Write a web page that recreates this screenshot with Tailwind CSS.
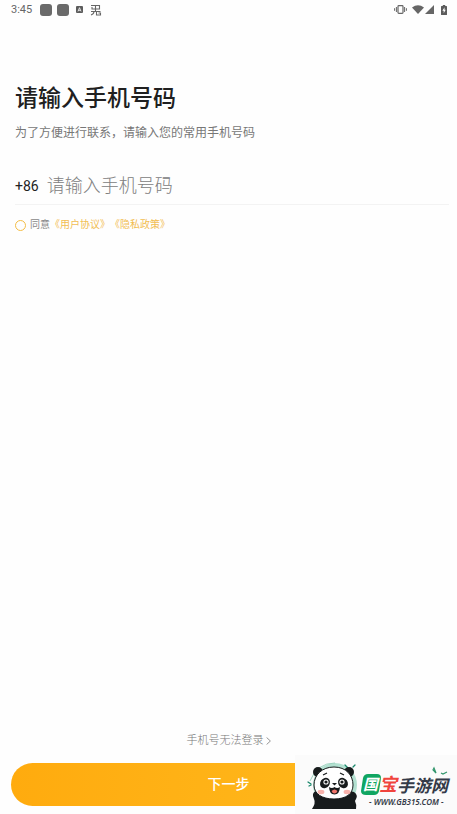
<!DOCTYPE html>
<html lang="zh-CN">
<head>
    <meta charset="UTF-8">
    <title>请输入手机号码</title>
    <meta name="viewport" content="width=device-width, initial-scale=1.0">
    <script src="https://cdn.jsdelivr.net/npm/@tailwindcss/browser@4"></script>
</head>
<body class="min-h-screen bg-[#fefefe] flex flex-col font-['Roboto','Noto_Sans_CJK_SC',sans-serif]">
    <!-- Status bar -->
    <header class="h-[19px] pl-[11px] pr-[10px] flex items-center justify-between text-[#666]">
        <div class="flex items-center">
            <span class="text-[11px] leading-4 mr-2">3:45</span>
            <span class="size-3 rounded-[3px] bg-[#6a6a6a] mr-[5px]"></span>
            <span class="size-3 rounded-[3px] bg-[#6a6a6a] mr-[7px]"></span>
            <svg class="size-[7px] mr-[7px]" viewBox="0 0 7 7"><rect width="7" height="7" rx="1" fill="#5c5c5c"/><path d="M2 5.4 3.5 1.7 5 5.4M2.5 4.3h2" fill="none" stroke="#fff" stroke-width=".8"/></svg>
            <svg class="size-3" viewBox="0 0 12 12" fill="none" stroke="#666" stroke-width="1.1"><path d="M1 1.5h8.500v3.500H2V3M5.500 1.500v6M1 7.500h9.500M4 7.500q0 2.500-3 3.500M6.500 7.500V11h4V9H8.500"/></svg>
        </div>
        <div class="flex items-center">
            <svg class="w-[13px] h-[9px] mr-[5px]" viewBox="0 0 13 9" fill="none" stroke="#666"><rect x="4" y=".7" width="5" height="7.6" rx=".8" stroke-width="1.2"/><path d="M2.4 2v5M10.6 2v5M.6 3.2v2.6M12.4 3.2v2.6"/></svg>
            <svg class="w-3 h-[9px] mr-px" viewBox="0 0 12 9" fill="#666"><path d="M6 9 0 2.4Q6-2 12 2.4Z"/></svg>
            <svg class="w-[9px] h-[9px] mr-[7px]" viewBox="0 0 9 9" fill="#666"><path d="M9 0v9H0Z"/></svg>
            <svg class="w-[6px] h-[10px]" viewBox="0 0 6 10"><path d="M1.8 0h2.4v1H5.4q.6 0 .6.6v7.8q0 .6-.6.6H.6Q0 10 0 9.4V1.6Q0 1 .6 1h1.2Z" fill="#5c5c5c"/><path d="M3.5 2.3 1.4 5.8h1.3v2.5l2-3.6H3.5Z" fill="#fff"/></svg>
        </div>
    </header>

    <form class="flex-1 flex flex-col">
        <main class="flex-1 pt-[66px] pl-[15px] pr-2">
            <h1 class="text-[23px] leading-7 font-medium text-[#202020]">请输入手机号码</h1>
            <p class="mt-3 text-[12px] leading-4 text-[#777]">为了方便进行联系，请输入您的常用手机号码</p>

            <div class="mt-[30px] h-[34px] flex items-start border-b border-[#f3f3f3]">
                <label for="phone" class="mr-2 text-[14px] leading-[30px] text-[#222]">+86</label>
                <input id="phone" type="tel" placeholder="请输入手机号码" class="flex-1 min-w-0 h-7 text-[18px] font-light text-[#222] placeholder:text-[#808080] outline-none">
            </div>

            <div class="mt-3 flex items-center text-[10px] leading-4 text-[#888]">
                <input id="agree" type="checkbox" class="appearance-none size-[11px] rounded-full border border-[#f4bd45] checked:bg-[#f4bd45] mr-1">
                <label for="agree">同意</label>
                <a href="#" class="text-[#f2bd52]">《用户协议》</a>
                <a href="#" class="text-[#f2bd52]">《隐私政策》</a>
            </div>
        </main>

        <footer class="px-[11px] pb-2 flex flex-col items-center">
            <a href="#" class="flex items-center gap-0.5 mb-3.5 text-[11px] leading-4 font-light text-[#777]">手机号无法登录
                <svg class="w-[5px] h-2" viewBox="0 0 5 8" fill="none" stroke="#888" stroke-width=".9"><path d="M.6.5 4.4 4 .6 7.5"/></svg>
            </a>
            <button type="submit" class="w-full h-[43px] rounded-full bg-linear-to-r from-[#ffab0e] to-[#ffbb1e] text-[14px] font-medium text-white">下一步</button>
        </footer>
    </form>

    <!-- Site badge over the bottom corner -->
    <aside class="fixed right-0 bottom-0 w-[162px] h-[59px] bg-[#fbfbfb]">
        <svg class="w-full h-full" viewBox="0 0 162 59">
            <circle cx="40" cy="30" r="22" fill="#b2e0d0"/>
            <path d="M15 26Q22 8 40 8" fill="none" stroke="#9bd3bf"/>
            <g fill="none" stroke="#18876b" stroke-width="1.3" stroke-linecap="round">
                <path d="m50 10 3 3M58 12l2-2M13 27l3 2M14 31l2-1"/>
            </g>
            <!-- body and paws -->
            <path d="M17 54q4-6 2-10-3-6 2-8 5-1 7 5h24q3-6 7-4 5 3 1 9 2 4 1 8Z" fill="#171b1c"/>
            <!-- ears and head -->
            <circle cx="23" cy="17" r="5" fill="#171b1c"/>
            <circle cx="54" cy="17" r="5" fill="#171b1c"/>
            <path d="M39 12C27 12 19 20 19 30c0 9 8 14 20 14s19-5 19-14c0-10-7-18-19-18Z" fill="#fff" stroke="#171b1c"/>
            <path d="m28 20 4-2M45 18l4 2" fill="none" stroke="#171b1c" stroke-width="1.2"/>
            <ellipse cx="30" cy="28" rx="4.6" ry="5.6" transform="rotate(35 30 28)" fill="#171b1c"/>
            <ellipse cx="48" cy="28" rx="4.6" ry="5.6" transform="rotate(-35 48 28)" fill="#171b1c"/>
            <circle cx="31" cy="27" r="2.6" fill="#fff"/>
            <circle cx="47" cy="27" r="2.6" fill="#fff"/>
            <circle cx="31" cy="27" r="1.6" fill="#171b1c"/>
            <circle cx="47" cy="27" r="1.6" fill="#171b1c"/>
            <ellipse cx="26" cy="37" rx="3.4" ry="2.2" fill="#f9b3ac"/>
            <ellipse cx="52" cy="37" rx="3.4" ry="2.2" fill="#f9b3ac"/>
            <path d="M37 28h5l-2.5 2.6Z" fill="#171b1c"/>
            <path d="M34 32q3 2 5.5 0 2.5 2 5.5 0-.5 7.5-5.5 7.5T34 32Z" fill="#171b1c"/>
            <path d="M36.5 36q3-3 6 0-1 2.5-3 2.500t-3-2.5Z" fill="#f0746a"/>
            <!-- name -->
            <path d="M73 19h9q4 0 4 4l-2 13q-1 4-5 4h-8q-5 0-5-4l2-13q1-4 5-4Z" fill="#10a561"/>
            <g class="italic font-['Noto_Sans_CJK_SC',sans-serif]">
                <text x="68" y="35" font-size="15" fill="#fff" class="font-bold">国</text>
                <text x="84" y="36" font-size="18" fill="#f0443d" class="font-bold">宝</text>
                <text x="102" y="37" font-size="17" fill="#343a48" class="font-bold">手游网</text>
            </g>
            <path d="m139 13 2 5-3-3ZM146 18l2 1 4-2" fill="none" stroke="#31966c" stroke-width="1.2"/>
            <text x="74" y="50" font-size="8" fill="#343a48" class="italic font-semibold font-['Noto_Sans',sans-serif]">- WWW.GB315.COM -</text>
        </svg>
    </aside>
</body>
</html>
